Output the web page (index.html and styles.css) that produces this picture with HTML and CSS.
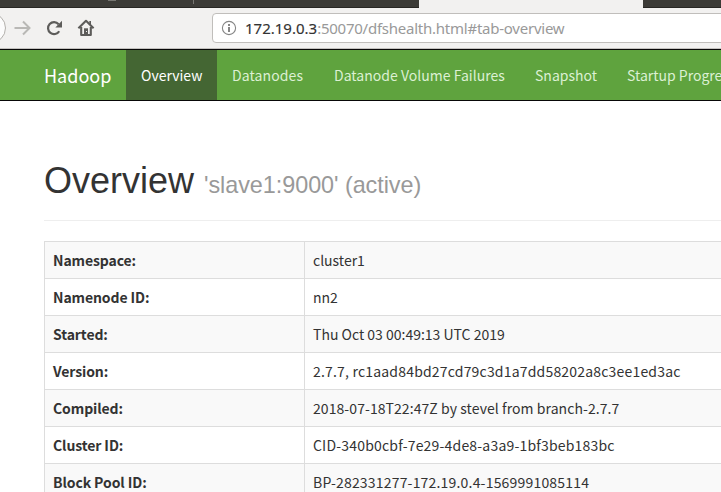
FILE: index.html
```html
<!DOCTYPE html>
<html lang="en">
<head>
<meta charset="utf-8">
<title>Namenode information</title>
<link rel="stylesheet" href="styles.css">
</head>
<body>
<div class="tabstrip">
  <div class="tabs-left"><i class="tab-title"></i><i class="tab-divider"></i></div>
  <div class="tab-active"></div>
  <div class="tabs-right"></div>
</div>
<div class="toolbar">
  <svg class="tools" width="110" height="40" viewBox="0 8 110 40" fill="none">
    <circle cx="-9.5" cy="28" r="15" fill="#fcfcfc" stroke="#b3b0ac"/>
    <path d="M14.5 28H29M23 21.5l6.5 6.5-6.5 6.5" stroke="#b9b8b5" stroke-width="2"/>
    <path d="M59.2 31.2A6 6 0 1 1 58.6 24.2" stroke="#5d5c5a" stroke-width="2.2"/>
    <path d="M62 20.8v6.7h-6.7z" fill="#5d5c5a"/>
    <path d="M78.4 28.3L86 20.8l7.6 7.5M81.2 27v8h9.6v-8" stroke="#5d5c5a" stroke-width="2.1" stroke-linejoin="round"/>
    <path d="M84 28.3h4v6.7h-4z" fill="#5d5c5a"/><path d="M86 31h1v1h-1z" fill="#f2f1f0"/>
    <path d="M89.3 21h1.7v4h-1.7z" fill="#5d5c5a"/>
  </svg>
  <div class="urlbar">
    <svg class="info" width="16" height="16" viewBox="0 0 16 16" fill="none">
      <circle cx="8" cy="8" r="6.6" stroke="#858585" stroke-width="1.1"/>
      <path d="M7 4h2v2H7zM7 7h2v5H7z" fill="#858585"/>
    </svg>
    <span class="host">172.19.0.3</span><span class="path">:50070/dfshealth.html#tab-overview</span>
  </div>
</div>
<nav class="navbar">
  <a class="brand">Hadoop</a>
  <a class="active">Overview</a>
  <a class="datanodes">Datanodes</a>
  <a class="failures">Datanode Volume Failures</a>
  <a class="snapshot">Snapshot</a>
  <a>Startup Progress</a>
</nav>
<main class="container">
  <h1>Overview <small>'slave1:9000' (active)</small></h1>
  <table>
    <tr><th>Namespace:</th><td>cluster1</td></tr>
    <tr><th>Namenode ID:</th><td>nn2</td></tr>
    <tr><th>Started:</th><td>Thu Oct 03 00:49:13 UTC 2019</td></tr>
    <tr><th>Version:</th><td class="hash">2.7.7, rc1aad84bd27cd79c3d1a7dd58202a8c3ee1ed3ac</td></tr>
    <tr><th>Compiled:</th><td class="build">2018-07-18T22:47Z by stevel from branch-2.7.7</td></tr>
    <tr><th>Cluster ID:</th><td class="hash">CID-340b0cbf-7e29-4de8-a3a9-1bf3beb183bc</td></tr>
    <tr><th>Block Pool ID:</th><td class="hash">BP-282331277-172.19.0.4-1569991085114</td></tr>
  </table>
</main>
</body>
</html>
```
FILE: styles.css
```css
* { box-sizing: border-box; }
html { height: 492px; overflow: hidden; }
body {
  margin: 0;
  height: 492px;
  overflow: hidden;
  background: #fff;
  color: #333;
  font: 14px/20px "Noto Sans CJK SC", sans-serif;
}
.tabstrip { display: flex; height: 8px; background: #f2f1f0; }
.tabs-left, .tabs-right { background: #3c3b37; border-bottom: 1px solid #282724; }
.tabs-left { width: 419px; display: flex; }
.tab-title { width: 8px; height: 1px; margin-left: 108px; background: #777672; }
.tab-divider { width: 1px; height: 4px; margin-left: 77px; background: #777672; }
.tab-active { width: 224px; }
.tabs-right { flex: 1; }
.tabstrip > div { flex-shrink: 0; }
.toolbar {
  display: flex;
  height: 41px;
  overflow: hidden;
  background: #f2f1f0;
  border-bottom: 1px solid #c4c2bf;
}
.tools { flex: none; }
.urlbar {
  display: flex;
  align-items: center;
  flex: none;
  width: 530px;
  height: 30px;
  margin: 5px 0 0 102px;
  padding-left: 8px;
  border: 1px solid #c0bebb;
  border-radius: 4px;
  background: #fff;
  font: 15px/28px "Noto Sans", sans-serif;
  white-space: nowrap;
}
.info { margin-right: 8px; }
.host { color: #333; -webkit-text-stroke: .15px #333; }
.path { color: #999; letter-spacing: -.24px; }
.navbar {
  display: flex;
  height: 52px;
  padding-left: 29px;
  overflow: hidden;
  border: solid #080808;
  border-width: 1px 0;
  background: #5fa33e;
}
.navbar a { flex: none; padding: 15px; color: #dcf0d3; white-space: nowrap; }
.navbar .brand { width: 97px; color: #fff; font-size: 18px; }
.navbar .active { width: 91px; background: #446633; color: #fff; }
.navbar .datanodes { width: 102px; letter-spacing: .1px; }
.navbar .failures { width: 201px; letter-spacing: .02px; }
.navbar .snapshot { width: 92px; }
.container { width: 100%; overflow: hidden; padding-left: 44px; }
h1 {
  margin: 60px 0 20px;
  padding-bottom: 19px;
  border-bottom: 1px solid #eee;
  font: 36px/40px "Liberation Sans", sans-serif;
}
h1 small { font-size: 23.4px; line-height: 1; letter-spacing: -.05px; color: #999; }
table { width: 1140px; table-layout: fixed; border-collapse: collapse; }
th, td { padding: 8px; border: 1px solid #ddd; text-align: left; }
th { width: 260px; font-weight: 700; letter-spacing: -.1px; }
.hash { letter-spacing: .19px; }
.build { letter-spacing: .07px; }
tr:nth-child(odd) { background: #f9f9f9; }
```
